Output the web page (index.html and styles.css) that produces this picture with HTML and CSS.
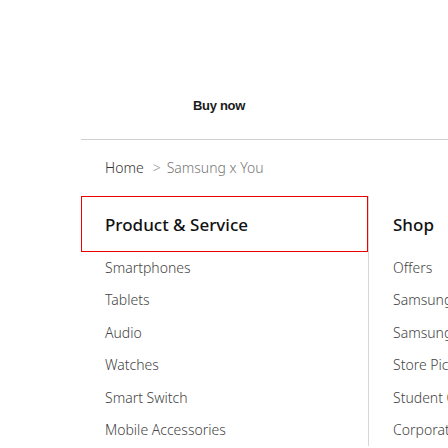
FILE: index.html
```html
<!DOCTYPE html>
<html>
<head>
<meta charset="utf-8">
<link rel="stylesheet" href="styles.css">
</head>
<body>
<div class="top"><span class="buy">Buy now</span></div>
<div class="rule"></div>
<nav class="crumbs"><span class="home">Home</span><span class="sep">&gt;</span><span class="cur">Samsung x You</span></nav>
<div class="menu">
  <div class="col col-first">
    <h2 class="head head-focus">Product &amp; Service</h2>
    <ul class="list">
      <li>Smartphones</li>
      <li>Tablets</li>
      <li>Audio</li>
      <li>Watches</li>
      <li>Smart Switch</li>
      <li>Mobile Accessories</li>
    </ul>
  </div>
  <div class="col col-second">
    <h2 class="head">Shop</h2>
    <ul class="list">
      <li>Offers</li>
      <li>Samsung Experience Store</li>
      <li>Samsung Rewards</li>
      <li>Store Pickup</li>
      <li>Student Offers</li>
      <li>Corporate Offers</li>
    </ul>
  </div>
</div>
</body>
</html>
```
FILE: styles.css
```css
html, body { margin: 0; padding: 0; background: #fff; }
body { width: 448px; height: 448px; overflow: hidden; font-family: "Noto Sans", sans-serif; }
.top { height: 139px; box-sizing: border-box; padding: 93px 0 0 193px; }
.buy { font-family: "Liberation Sans", Arial, sans-serif; font-size: 13px; line-height: 16px; font-weight: 700; color: #1a1a1a; letter-spacing: -0.3px; }
.rule { margin-left: 81px; border-top: 1px solid #cfcfcf; }
.crumbs { padding: 18px 0 0 105px; height: 38px; box-sizing: border-box; font-size: 14px; font-weight: 300; line-height: 20px; white-space: nowrap; }
.home { color: #333; }
.sep { color: #999; margin: 0 6px 0 9px; }
.cur { color: #777; }
.menu { display: grid; grid-template-columns: 287px 1fr; margin-left: 81px; margin-top: 18px; }
.col-second { border-left: 1px solid #d6d6d6; padding-left: 24px; white-space: nowrap; overflow: hidden; }
.head { margin: 0; height: 56px; box-sizing: border-box; display: flex; align-items: center; font-size: 17px; font-weight: 500; color: #111; }
.col-first .head { padding-left: 23px; }
.head-focus { border: 1px solid #e00; }
.list { list-style: none; margin: 0; padding: 0; }
.col-first .list { padding-left: 24px; }
.list li { height: 32.4px; line-height: 32px; font-size: 14px; font-weight: 300; color: #444; }
```
